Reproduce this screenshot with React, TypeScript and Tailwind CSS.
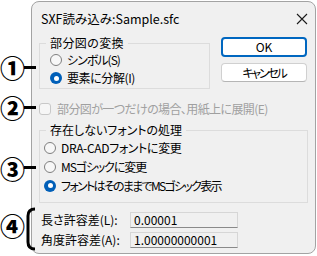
import React from 'react'

function Radio({ checked }: { checked?: boolean }) {
  return checked ? (
    <span className="flex h-[12px] w-[12px] shrink-0 items-center justify-center rounded-full bg-[#005fb8]">
      <span className="h-[5px] w-[5px] rounded-full bg-white" />
    </span>
  ) : (
    <span className="h-[12px] w-[12px] shrink-0 rounded-full border border-[#7f7f7f] bg-[#f7f7f7]" />
  )
}

function Option({ label, checked, h, track }: { label: string; checked?: boolean; h: string; track: string }) {
  return (
    <div className={`flex items-center gap-[5px] ${h}`}>
      <Radio checked={checked} />
      <span className={track}>{label}</span>
    </div>
  )
}

function Field({ label, value }: { label: string; value: string }) {
  return (
    <div className="flex h-[16px] items-center">
      <span className="w-[89px]">{label}</span>
      <div className="flex h-[16px] w-[108px] items-center border border-[#d6d6d6] border-b-[#8a8a8a] bg-[#f0f0f0] pl-[3px]">
        {value}
      </div>
    </div>
  )
}

export default function App() {
  return (
    <div className="relative h-[256px] w-[317px] overflow-hidden bg-white pt-px text-[12px] leading-[16px] text-black font-['Noto_Sans_CJK_JP','Noto_Sans',sans-serif] [font-feature-settings:'palt']">
      {/* dialog */}
      <div className="ml-[31px] flex h-[253px] w-[285px] flex-col rounded-[8px] border border-[#a3a3a3] bg-[#f0f0f0]">
        <div className="flex h-[33px] items-center justify-between pl-[9px] pr-[7px]">
          <span className="text-[12.5px]">SXF読み込み:Sample.sfc</span>
          <svg width="12" height="12" viewBox="0 0 12 12">
            <path d="M1 1 L11 11 M11 1 L1 11" stroke="#1a1a1a" strokeWidth="1.1" />
          </svg>
        </div>

        <div className="flex flex-col px-[7px]">
          <div className="flex items-start justify-between pr-[1px]">
            <fieldset className="w-[171px] border border-[#dcdcdc] pb-px pl-[6px]">
              <legend className="px-[4px] tracking-[0.4px]">部分図の変換</legend>
              <div className="pl-[4px]">
                <Option label="シンボル(S)" h="h-[18px]" track="tracking-[-1px]" />
                <Option label="要素に分解(I)" checked h="h-[18px]" track="tracking-[-0.4px]" />
              </div>
            </fieldset>
            <div className="mt-[2px] flex w-[86px] flex-col gap-[6px]">
              <button className="flex h-[20px] items-center justify-center rounded-[4px] border-2 border-[#0067c0] bg-white">
                OK
              </button>
              <button className="flex h-[19px] items-center justify-center rounded-[4px] border border-[#d0d0d0] border-b-[#b5b5b5] bg-white tracking-[-2.2px]">
                キャンセル
              </button>
            </div>
          </div>

          <div className="mt-[12px] flex h-[16px] items-center gap-[6px] text-[#a0a0a0]">
            <span className="h-[12px] w-[12px] rounded-[3px] border border-[#c8c8c8] bg-[#f6f6f6]" />
            <span className="tracking-[-0.6px]">部分図が一つだけの場合、用紙上に展開(E)</span>
          </div>

          <fieldset className="mt-[5px] border border-[#dcdcdc] pb-[7px] pl-[4px]">
            <legend className="ml-[2px] px-[4px]">存在しないフォントの処理</legend>
            <Option label="DRA-CADフォントに変更" h="h-[19px]" track="tracking-[-0.35px]" />
            <Option label="MSゴシックに変更" h="h-[19px]" track="tracking-[-1.1px]" />
            <Option label="フォントはそのままでMSゴシック表示" checked h="h-[19px]" track="tracking-[-1.7px]" />
          </fieldset>

          <div className="mt-[9px] flex flex-col gap-[4px] pl-[2px]">
            <Field label="長さ許容差(L):" value="0.00001" />
            <Field label="角度許容差(A):" value="1.00000000001" />
          </div>
        </div>
      </div>

      {/* annotations */}
      <span className="absolute left-0 top-[54px] text-[25px] font-black leading-[26px]">①</span>
      <span className="absolute left-[24px] top-[66px] h-[3px] w-[12px] bg-black" />
      <span className="absolute left-0 top-[94px] text-[25px] font-black leading-[26px]">②</span>
      <span className="absolute left-[24px] top-[106px] h-[3px] w-[12px] bg-black" />
      <span className="absolute left-0 top-[155px] text-[25px] font-black leading-[26px]">③</span>
      <span className="absolute left-[24px] top-[166px] h-[3px] w-[12px] bg-black" />
      <span className="absolute left-0 top-[212px] text-[25px] font-black leading-[26px]">④</span>
      <svg className="absolute left-[24px] top-[206px]" width="14" height="46" viewBox="0 0 14 46">
        <path d="M11 3 Q4 3 4 10 L4 36 Q4 43 11 43" fill="none" stroke="#000" strokeWidth="3" />
      </svg>
    </div>
  )
}
